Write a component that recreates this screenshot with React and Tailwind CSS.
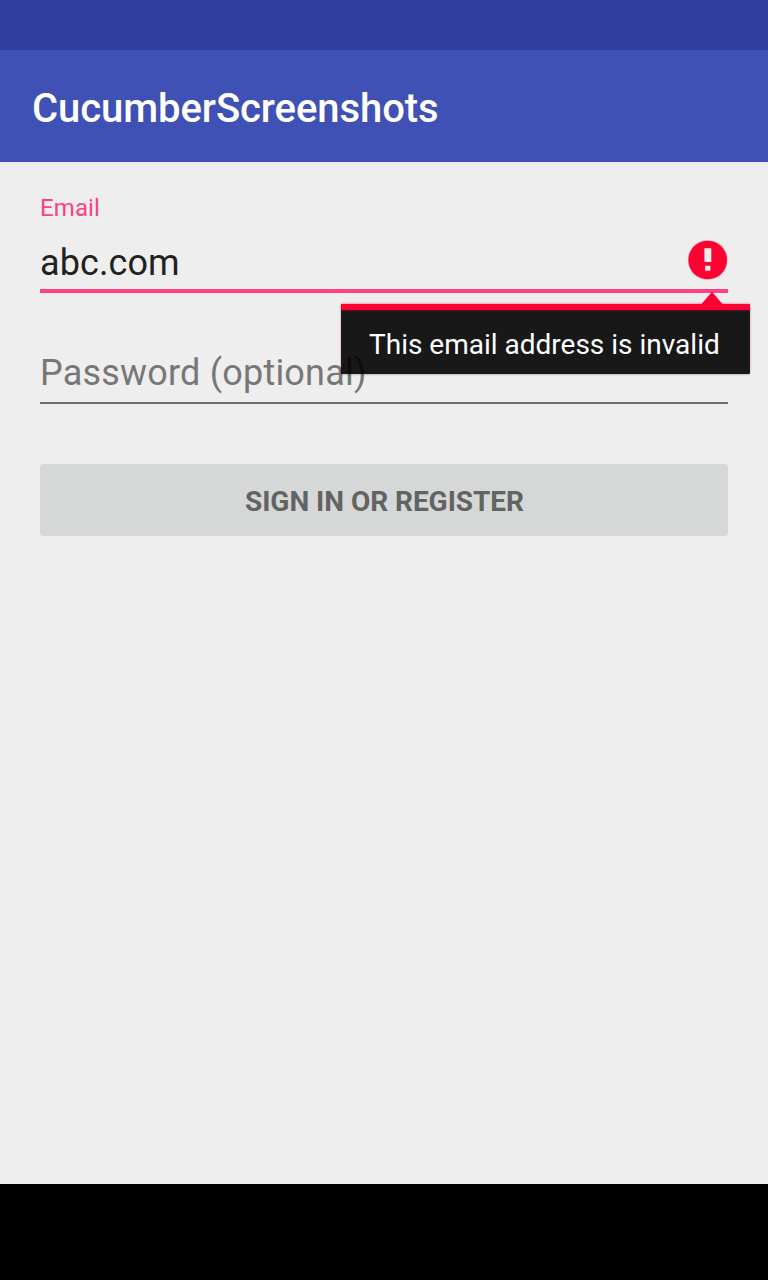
export default function App() {
  return (
    <div className="flex h-[1280px] w-[768px] flex-col overflow-hidden bg-[#eeeeee] font-['Roboto',sans-serif]">
      <div className="h-[50px] shrink-0 bg-[#303f9f]" />
      <header className="flex h-28 shrink-0 items-center bg-[#3f51b5] px-8 pt-1.5">
        <h1 className="text-[40px] leading-none font-medium tracking-[-0.06px] text-white">CucumberScreenshots</h1>
      </header>
      <main className="flex grow flex-col px-10 pt-8">
        <label className="h-7 text-[24px] leading-7 tracking-[0.1px] text-[#ff4081]">Email</label>
        <div className="relative mt-4 flex h-[55px] items-start justify-between border-b-4 border-[#ff4081]">
          <span className="pt-1 text-[36px] leading-[42px] tracking-[0.1px] text-[#212121]">abc.com</span>
          <svg className="mt-0.5 h-10 w-10 overflow-visible" viewBox="0 0 40 40">
            <circle cx="19.7" cy="20" r="20" fill="#ff0033" fillOpacity="0.2" />
            <circle cx="19.7" cy="20" r="19.3" fill="#ff0033" />
            <path d="M16.4 8.2h6.9v13.7h-6.9zM17.1 25.8h5.3v4.9h-5.3z" fill="#eeeeee" />
          </svg>
          <div className="absolute top-[54px] right-[-22px] z-10 w-[409px]">
            <svg className="ml-[360px] h-3 w-[22px]" viewBox="0 0 22 12">
              <path d="M9.8 1.2Q11 -0.2 12.2 1.2L21.5 12H0.5z" fill="#ff0033" />
            </svg>
            <div className="h-[70px] rounded-b-[1px] bg-black/90 pt-1.5 pl-7 text-[28px] leading-[70px] whitespace-nowrap text-white shadow-[0_1px_2px_rgba(0,0,0,0.2),inset_0_6px_0_#ff0033,inset_0_7px_2px_rgba(255,0,51,0.3),0_-1px_2px_rgba(255,0,51,0.3)]">
              This email address is invalid
            </div>
          </div>
        </div>
        <div className="mt-[55px] h-[56px] border-b-2 border-[#6d6d6d] text-[36px] leading-[50px] tracking-[0.2px] text-[#777777]">
          Password (optional)
        </div>
        <button className="mt-[60px] h-[72px] rounded bg-[#d6d8d7] pt-[3px] pl-px text-[28px] font-bold tracking-[-0.03px] text-[#626463]">
          SIGN IN OR REGISTER
        </button>
      </main>
      <div className="h-24 shrink-0 bg-black" />
    </div>
  );
}
